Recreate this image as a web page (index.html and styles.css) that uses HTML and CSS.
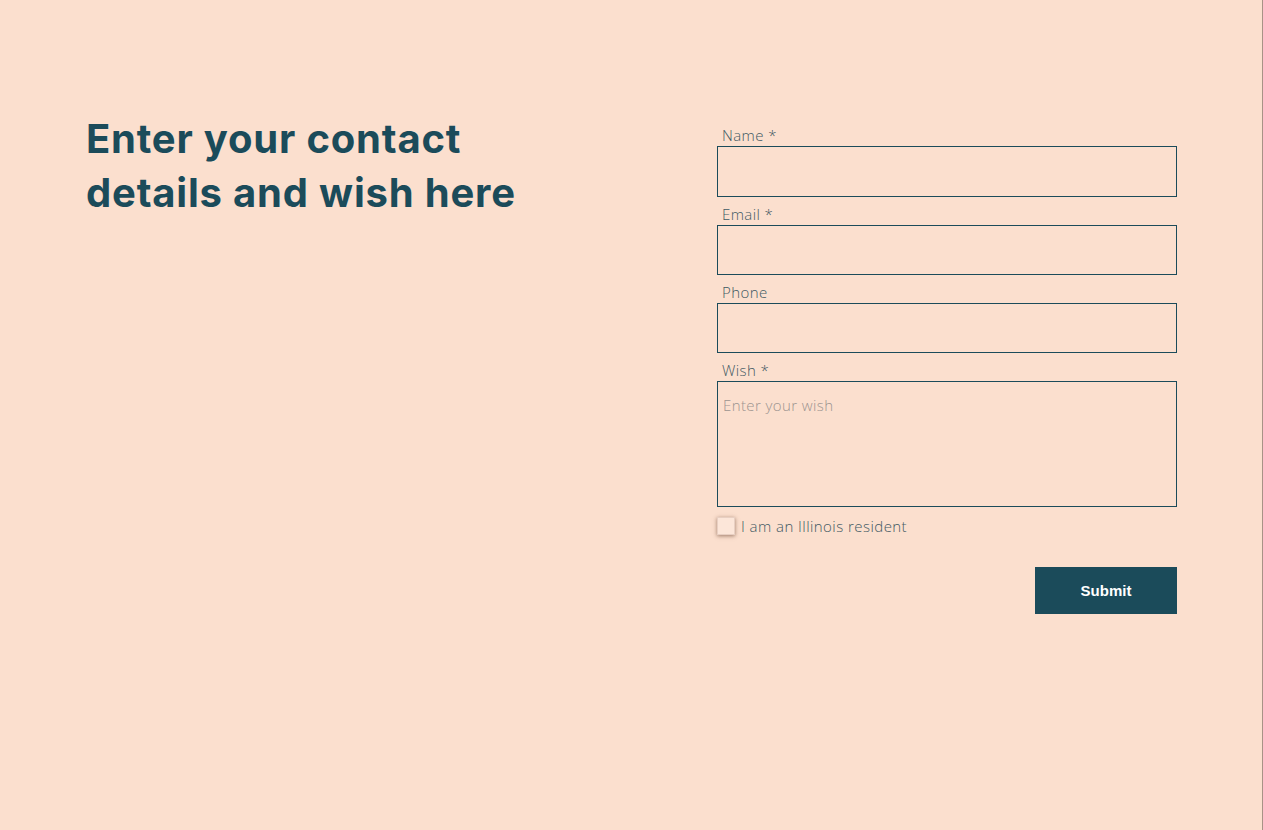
FILE: index.html
```html
<!DOCTYPE html>
<html lang="en">
<head>
<meta charset="utf-8">
<title>Contact</title>
<link rel="stylesheet" href="styles.css">
</head>
<body>
<div class="page">
  <main class="content">
    <h1 class="title">Enter your contact<br>details and wish here</h1>
    <form class="form">
      <div class="field">
        <label class="label">Name *</label>
        <input class="input first" type="text">
      </div>
      <div class="field">
        <label class="label">Email *</label>
        <input class="input" type="text">
      </div>
      <div class="field">
        <label class="label">Phone</label>
        <input class="input" type="text">
      </div>
      <div class="field">
        <label class="label">Wish *</label>
        <textarea class="input area" placeholder="Enter your wish"></textarea>
      </div>
      <label class="check">
        <span class="box"></span>
        <span class="check-text">I am an Illinois resident</span>
      </label>
      <div class="actions">
        <button type="button" class="submit">Submit</button>
      </div>
    </form>
  </main>
</div>
</body>
</html>
```
FILE: styles.css
```css
html, body {
  margin: 0;
  padding: 0;
  background: #fbdfce;
}
.page {
  width: 1262px;
  height: 830px;
  border-right: 1px solid #a89286;
  background: #fbdfce;
  box-sizing: content-box;
}
.content {
  display: flex;
  justify-content: space-between;
  padding: 112px 85px 0 86px;
}
.title {
  margin: 0;
  font-family: "Inter", "Lato", sans-serif;
  font-weight: 700;
  font-size: 40px;
  line-height: 54px;
  letter-spacing: 0.8px;
  color: #1b4b5a;
}
.form {
  width: 460px;
  display: flex;
  flex-direction: column;
  padding-top: 12px;
}
.field {
  display: flex;
  flex-direction: column;
  margin-bottom: 6px;
}
.label {
  font-family: "Open Sans", "Lato", sans-serif;
  font-weight: 300;
  font-size: 15px;
  line-height: 20px;
  letter-spacing: 0.4px;
  color: #3f5963;
  padding: 1px 0 0 5px;
  margin-bottom: 1px;
}
.input {
  box-sizing: border-box;
  height: 50px;
  border: 1px solid #1b4b5a;
  background: transparent;
  margin: 0;
  border-radius: 0;
  outline: none;
  font-family: "Open Sans", sans-serif;
  font-size: 15px;
}
.input.first {
  height: 51px;
}
.area {
  height: 126px;
  resize: none;
  padding: 13px 5px;
  font-weight: 300;
  letter-spacing: 0.4px;
  color: #3f5963;
}
.area::placeholder {
  color: #9b9490;
  font-weight: 300;
}
.check {
  display: flex;
  align-items: center;
  gap: 6px;
  margin-top: 3px;
}
.box {
  width: 18px;
  height: 18px;
  box-sizing: border-box;
  background: #fce6d9;
  border: 1px solid #e8cfc2;
  box-shadow: 0 1px 4px rgba(80, 40, 20, 0.55);
}
.check-text {
  font-family: "Open Sans", sans-serif;
  font-weight: 300;
  font-size: 15px;
  letter-spacing: 0.45px;
  color: #3f5963;
}
.actions {
  display: flex;
  justify-content: flex-end;
  margin-top: 31px;
}
.submit {
  width: 142px;
  height: 47px;
  border: none;
  background: #1b4b5a;
  color: #ffffff;
  font-family: "Liberation Sans", Arial, sans-serif;
  font-weight: 700;
  font-size: 15px;
  cursor: pointer;
}
```
